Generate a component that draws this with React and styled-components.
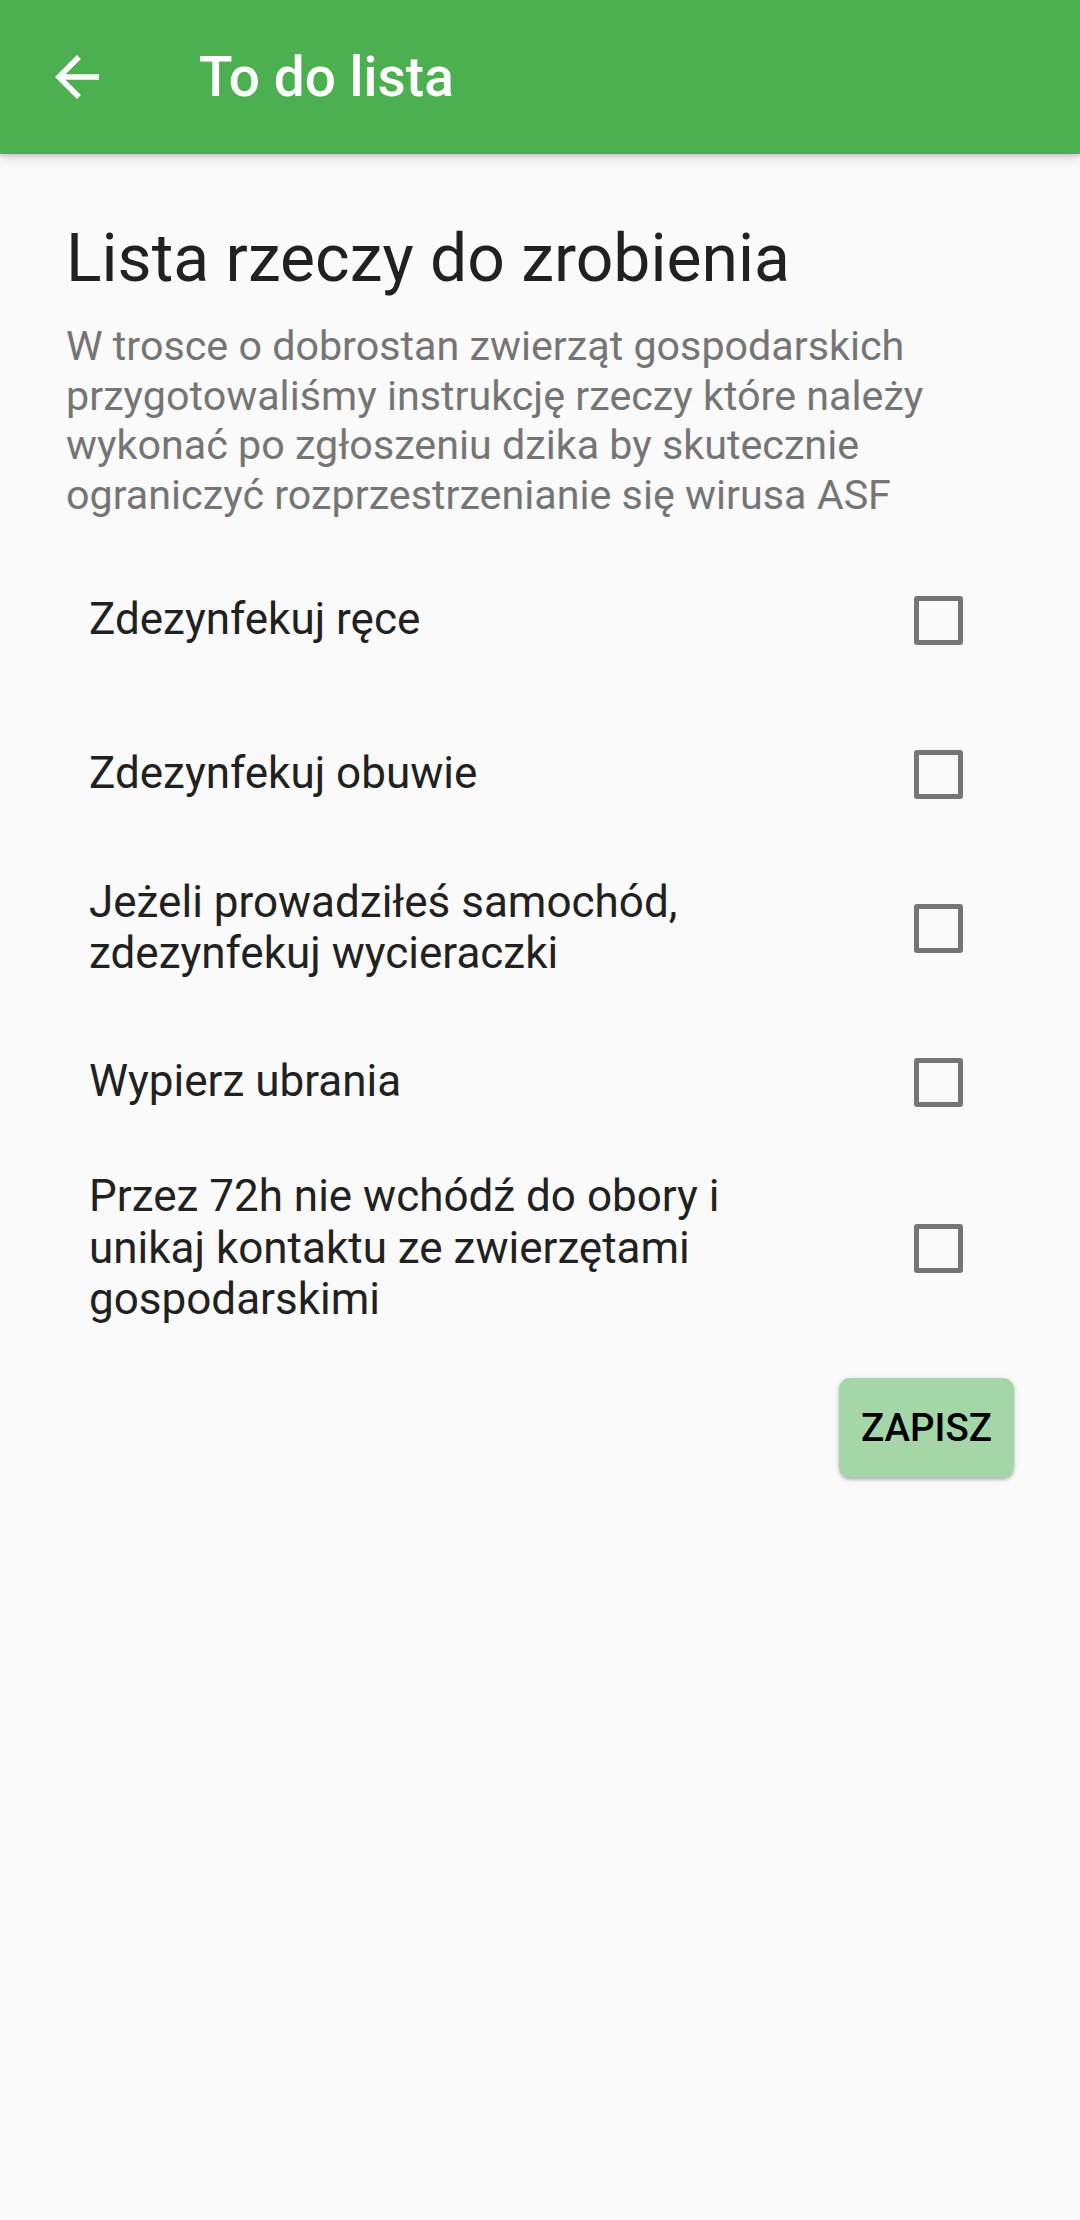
import React, { useState } from 'react';
import styled, { createGlobalStyle } from 'styled-components';

const GlobalStyle = createGlobalStyle`
  html, body {
    margin: 0;
    padding: 0;
    background: #fafafa;
    font-family: Roboto, "Noto Sans", sans-serif;
  }
`;

const Page = styled.div`
  width: 1080px;
  min-height: 2220px;
  background: #fafafa;
`;

const AppBar = styled.header`
  height: 154px;
  background: #4caf50;
  display: flex;
  align-items: center;
  box-shadow: 0 2px 4px rgba(0, 0, 0, 0.14), 0 4px 10px rgba(0, 0, 0, 0.12);
  position: relative;
  z-index: 1;
`;

const BackButton = styled.button`
  width: 66px;
  height: 66px;
  margin-left: 44px;
  padding: 0;
  border: none;
  background: transparent;
  display: flex;
  align-items: center;
  justify-content: center;
`;

const Title = styled.h1`
  margin: 0 0 0 89px;
  color: #fff;
  font-size: 55px;
  font-weight: 500;
  line-height: 1;
`;

const Content = styled.main`
  padding: 66px 0 0;
`;

const Heading = styled.h2`
  margin: 0 66px;
  color: #212121;
  font-size: 66px;
  font-weight: 400;
  line-height: 77px;
`;

const Intro = styled.p`
  margin: 25px 66px 0;
  color: #757575;
  font-size: 41.25px;
  line-height: 49.5px;
`;

const List = styled.ul`
  list-style: none;
  margin: 23px 0 0;
  padding: 0;
`;

const Row = styled.li`
  display: flex;
  align-items: center;
  gap: 103px;
  min-height: 154px;
  box-sizing: border-box;
  padding: 12px 117px 12px 89px;
  cursor: pointer;
`;

const Label = styled.span`
  flex: 1;
  color: #212121;
  font-size: 44px;
  line-height: 51.5px;
`;

const Box = styled.span`
  flex: none;
  width: 49px;
  height: 49px;
  box-sizing: border-box;
  border: 5.5px solid ${(p) => (p.checked ? '#4caf50' : '#757575')};
  background: ${(p) => (p.checked ? '#4caf50' : 'transparent')};
  border-radius: 3px;
`;

const Actions = styled.div`
  display: flex;
  justify-content: flex-end;
  padding: 40px 66px 0;
`;

const SaveButton = styled.button`
  height: 99px;
  padding: 0 22px;
  border: none;
  border-radius: 11px;
  background: #a5d6a7;
  color: #000;
  font-family: Roboto, sans-serif;
  font-size: 38.5px;
  font-weight: 500;
  box-shadow: 0 3px 3px rgba(0, 0, 0, 0.2), 0 1px 6px rgba(0, 0, 0, 0.12);
`;

const tasks = [
  'Zdezynfekuj ręce',
  'Zdezynfekuj obuwie',
  'Jeżeli prowadziłeś samochód, zdezynfekuj wycieraczki',
  'Wypierz ubrania',
  'Przez 72h nie wchódź do obory i unikaj kontaktu ze zwierzętami gospodarskimi',
];

const ArrowBack = () => (
  <svg width="66" height="66" viewBox="0 0 24 24" fill="#fff">
    <path d="M20 11H7.83l5.59-5.59L12 4l-8 8 8 8 1.41-1.41L7.83 13H20v-2z" />
  </svg>
);

const App = () => {
  const [done, setDone] = useState(tasks.map(() => false));

  const toggle = (i) => setDone(done.map((d, j) => (j === i ? !d : d)));

  return (
    <Page>
      <GlobalStyle />
      <AppBar>
        <BackButton aria-label="Wstecz">
          <ArrowBack />
        </BackButton>
        <Title>To do lista</Title>
      </AppBar>
      <Content>
        <Heading>Lista rzeczy do zrobienia</Heading>
        <Intro>
          W trosce o dobrostan zwierząt gospodarskich przygotowaliśmy instrukcję
          rzeczy które należy wykonać po zgłoszeniu dzika by skutecznie
          ograniczyć rozprzestrzenianie się wirusa ASF
        </Intro>
        <List>
          {tasks.map((t, i) => (
            <Row key={t} onClick={() => toggle(i)}>
              <Label>{t}</Label>
              <Box checked={done[i]} />
            </Row>
          ))}
        </List>
        <Actions>
          <SaveButton>ZAPISZ</SaveButton>
        </Actions>
      </Content>
    </Page>
  );
};

export default App;
